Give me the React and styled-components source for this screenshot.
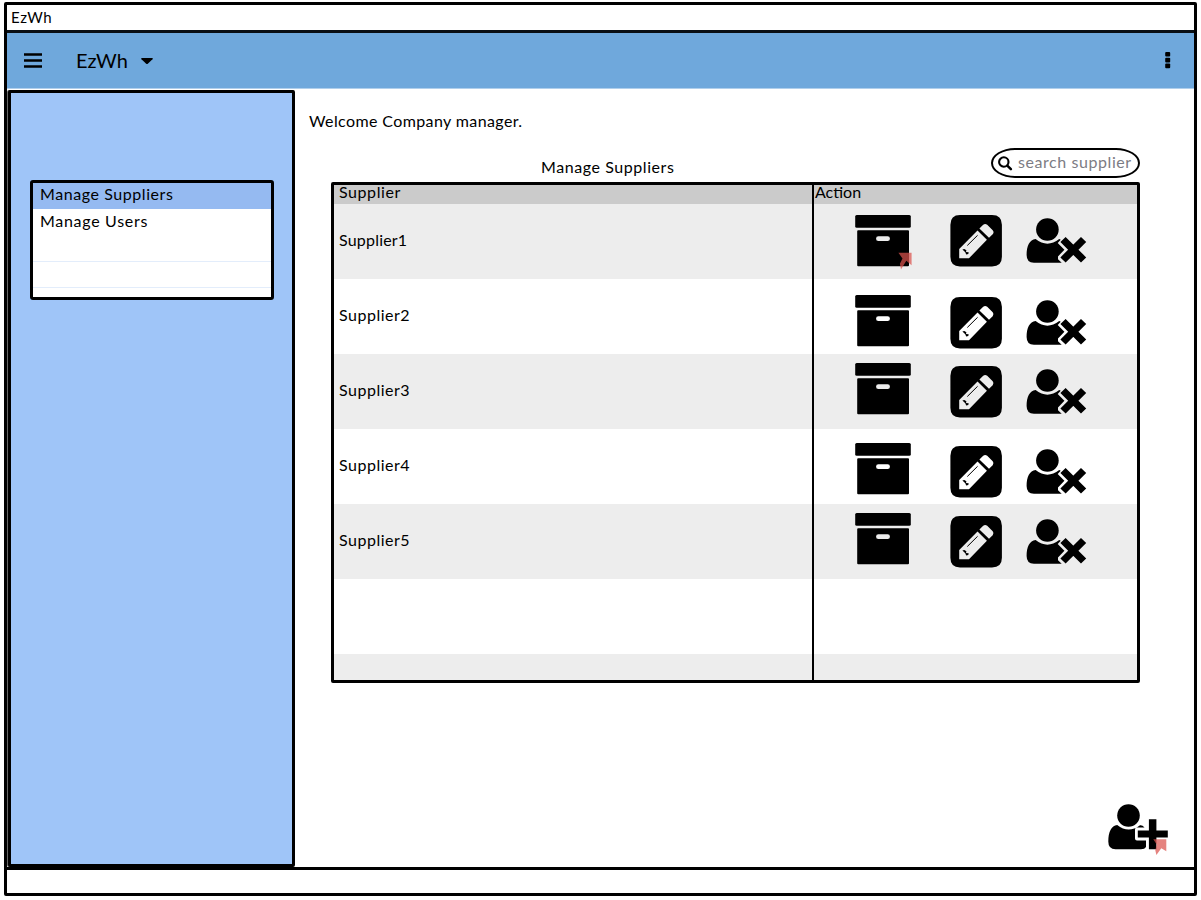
import React from 'react';
import styled, { createGlobalStyle } from 'styled-components';

const GlobalStyle = createGlobalStyle`
  * { box-sizing: border-box; }
  body {
    margin: 0;
    background: #fff;
    color: #000;
    font-family: Lato, "Liberation Sans", sans-serif;
    font-size: 16px;
    line-height: 20px;
  }
  svg { display: block; overflow: visible; flex: none; }
`;

const Label = styled.span`
  font-size: ${(p) => p.$size || 16}px;
  letter-spacing: ${(p) => p.$track ?? 0.57}px;
  white-space: nowrap;
`;

const Window = styled.div`
  display: flex;
  flex-direction: column;
  width: 1193px;
  height: 894px;
  margin: 2px 0 0 4px;
  border: 3px solid #000;
  border-radius: 2px;
`;

const TitleBar = styled.header`
  flex: none;
  height: 28px;
  padding: 2px 0 0 4px;
  border-bottom: 3px solid #0a0f14;
`;

const AppBar = styled.nav`
  flex: none;
  display: flex;
  align-items: center;
  height: 56px;
  padding: 0 23px 1px 17px;
  background: #6fa8dc;
  border-bottom: 1px solid #b0cfec;
`;

const Brand = styled.div`
  display: flex;
  align-items: center;
  gap: 13px;
  flex: 1;
  margin: -1px 0 0 34px;
`;

const Body = styled.div`
  display: flex;
  flex: 1;
  min-height: 0;
`;

const Sidebar = styled.aside`
  width: 287px;
  margin: 1px 0 0 1px;
  padding: 87px 0 0 19px;
  background: #9fc5f8;
  border: 3px solid #000;
  border-radius: 2px;
  box-shadow: -1px 0 0 #666;
`;

const Menu = styled.ul`
  width: 244px;
  height: 120px;
  margin: 0;
  padding: 0;
  list-style: none;
  overflow: hidden;
  background: #fff;
  border: 3px solid #000;
  border-radius: 3px;
`;

const MenuItem = styled.li`
  height: 26px;
  padding: ${(p) => (p.$active ? 1 : 2)}px 0 0 7px;
  background: ${(p) => (p.$active ? '#95baf1' : '#fff')};
  border-bottom: ${(p) => (p.$ruled ? '1px solid #e3edfb' : 'none')};

  &:nth-child(3) { height: 27px; }
`;

const Content = styled.main`
  flex: 1;
  display: flex;
  flex-direction: column;
  padding: 22px 26px 17px 14px;
`;

const Heading = styled.div`
  display: flex;
  align-items: flex-start;
  justify-content: space-between;
  height: 34px;
  margin: 17px 28px 0 232px;
`;

const Caption = styled.div`
  padding-top: 9px;
`;

const SearchBox = styled.div`
  display: flex;
  align-items: center;
  gap: 5px;
  width: 149px;
  height: 30px;
  padding: 0 0 2px 5px;
  color: #7c7c84;
  border: 2.5px solid #000;
  border-radius: 24px / 15px;
`;

const Table = styled.section`
  display: flex;
  flex-direction: column;
  width: 809px;
  height: 501px;
  margin-left: 22px;
  overflow: hidden;
  border: 3px solid #000;
  border-radius: 2px;
`;

const Row = styled.div`
  display: grid;
  grid-template-columns: 480px 1fr;
  flex: none;
  height: ${(p) => p.$height || 75}px;
  background: ${(p) => p.$fill};
`;

const NameCell = styled.div`
  display: flex;
  align-items: center;
  padding: 0 0 4px 5px;
  border-right: 2px solid #000;
`;

const NameHead = styled(NameCell)`
  align-items: flex-start;
  padding-bottom: 0;
  line-height: 14px;
`;

const ActionHead = styled.div`
  padding-left: 1px;
  line-height: 14px;
`;

const ActionCell = styled.div`
  display: flex;
  align-items: flex-start;
`;

const IconButton = styled.button`
  display: block;
  margin: ${(p) => p.$top}px 0 0 ${(p) => p.$left}px;
  padding: 0;
  background: none;
  border: 0;
`;

const AddUser = styled.button`
  align-self: flex-end;
  margin-top: auto;
  padding: 0;
  background: none;
  border: 0;
`;

const Footer = styled.footer`
  flex: none;
  height: 26px;
  border-top: 3px solid #000;
`;

const MARK = 'rgba(219, 83, 78, 0.72)';

function ArchiveIcon({ marked }) {
  return (
    <svg width="56" height="52" viewBox="0 0 56 52">
      <rect x="0.2" width="55.6" height="12.8" rx="1.5" />
      <path
        fillRule="evenodd"
        d="M3.2 15.2H53q1 0 1 1V50.3q0 1-1 1H3.2q-1 0-1-1V16.2q0-1 1-1ZM23.4 21.3a2.3 2.3 0 0 0 0 4.7h9.2a2.3 2.3 0 0 0 0-4.7Z"
      />
      {marked && <path fill={MARK} d="M43.4 37.7H56.600V50.300L51.300 45.800 46 54.500 44.900 48.800 47.500 43.500Z" />}
    </svg>
  );
}

function PencilIcon() {
  return (
    <svg width="52" height="52" viewBox="0 0 52 52">
      <path
        fillRule="evenodd"
        d="M10 0H42Q51.900 0 51.900 9.700V41.700Q51.900 51.400 42 51.400H10Q.4 51.400 .4 41.700V9.700Q.4 0 10 0ZM9.200 34 27.500 15.500 36.900 24.800 19 43.300H9.200ZM29.400 13.500 33.200 9.700Q35.100 8.200 37.200 9.700L42.700 15.200Q44.400 17.200 42.700 19.200L39 22.800Z"
      />
      <path d="M17.300 30.500 27.600 20.300" stroke="#000" strokeWidth="1" />
      <path d="M12.400 34.600 14.300 34 16.400 35.300 16 37 18.700 37.300 18.300 39 16.200 39.600 15.300 37.300Z" />
    </svg>
  );
}

function RemoveUserIcon() {
  return (
    <svg width="60" height="46" viewBox="0 0 60 46">
      <g transform="translate(0.400 0)">
        <circle cx="21" cy="11.500" r="11.300" />
        <path d="M9.200 21Q21 30.300 32.800 21L34.300 21.700 31.300 25 38 31.800 31.600 38.400V41.300L35.300 44.700H7.500Q.2 44.700 .2 37 .2 22.500 9.200 21Z" />
        <path d="M36.600 21.500 57.200 42M57.200 21.500 36.600 42" stroke="#000" strokeWidth="7.400" />
      </g>
    </svg>
  );
}

function AddUserIcon() {
  return (
    <svg width="60" height="46" viewBox="0 0 60 46">
      <circle cx="20.500" cy="11.500" r="11.300" />
      <path d="M9.200 21Q20.500 30 32 21.200 34.500 20.900 36.500 23.500H29Q27 23.500 27 25.500V34.500Q27 36.600 29 36.600H38V43Q36.800 45.300 33 45.300H7.500Q.3 45.300 .3 37.500 .3 22.500 9.200 21Z" />
      <path d="M40.900 15.300H48.400V26.600H59.800V33.500H48.400V45.300H40.900V33.500H29.800V26.600H40.900Z" />
      <path fill={MARK} d="M45.300 35.300H58.300V47.300L53.300 44.300 48.400 51 47.300 46.300 48.700 40.600Z" />
    </svg>
  );
}

const suppliers = [
  { name: 'Supplier1', tops: [11, 11, 14], marked: true, track: 0.2 },
  { name: 'Supplier2', tops: [16, 18, 21] },
  { name: 'Supplier3', tops: [9, 12, 15] },
  { name: 'Supplier4', tops: [14, 17, 20] },
  { name: 'Supplier5', tops: [9, 12, 15] },
];

export default function App() {
  return (
    <>
      <GlobalStyle />
      <Window>
        <TitleBar>
          <Label $size={15} $track={0.6}>EzWh</Label>
        </TitleBar>
        <AppBar>
          <svg width="18" height="15" viewBox="0 0 18 15">
            <path d="M0 1.500H18M0 7.500H18M0 13.500H18" stroke="#000" strokeWidth="2.600" />
          </svg>
          <Brand>
            <Label $size={20} $track={0}>EzWh</Label>
            <svg width="12" height="6" viewBox="0 0 12 6">
              <path d="M.7 1H11.300Q12.300 1.400 11.500 2.200L6.800 6.800Q6 7.400 5.200 6.800L.5 2.200Q-.3 1.400 .7 1Z" />
            </svg>
          </Brand>
          <svg width="6" height="17" viewBox="0 0 6 17">
            <rect x="0.200" y="0" width="5" height="4.600" rx="1" />
            <rect x="0.200" y="5.800" width="5" height="4.600" rx="1" />
            <rect x="0.200" y="11.600" width="5" height="4.600" rx="1" />
          </svg>
        </AppBar>
        <Body>
          <Sidebar>
            <Menu>
              <MenuItem $active><Label>Manage Suppliers</Label></MenuItem>
              <MenuItem><Label $track={0.7}>Manage Users</Label></MenuItem>
              <MenuItem $ruled />
              <MenuItem $ruled />
            </Menu>
          </Sidebar>
          <Content>
            <Label $track={0.39}>Welcome Company manager.</Label>
            <Heading>
              <Caption><Label>Manage Suppliers</Label></Caption>
              <SearchBox>
                <svg width="15" height="15" viewBox="0 0 15 15" fill="none" stroke="#000">
                  <circle cx="5.800" cy="7" r="4.700" strokeWidth="2.100" />
                  <path d="M9.300 10.600 12.900 14.200" strokeWidth="2.500" strokeLinecap="round" />
                </svg>
                <Label>search supplier</Label>
              </SearchBox>
            </Heading>
            <Table>
              <Row $height={19} $fill="#cbcbcb">
                <NameHead><Label>Supplier</Label></NameHead>
                <ActionHead><Label $track={0}>Action</Label></ActionHead>
              </Row>
              {suppliers.map((s, i) => (
                <Row key={s.name} $fill={i % 2 ? '#fff' : '#ededed'}>
                  <NameCell><Label $track={s.track ?? 0.5}>{s.name}</Label></NameCell>
                  <ActionCell>
                    <IconButton $top={s.tops[0]} $left={41}><ArchiveIcon marked={s.marked} /></IconButton>
                    <IconButton $top={s.tops[1]} $left={39}><PencilIcon /></IconButton>
                    <IconButton $top={s.tops[2]} $left={24}><RemoveUserIcon /></IconButton>
                  </ActionCell>
                </Row>
              ))}
              <Row $fill="#fff"><NameCell /></Row>
              <Row $height={28} $fill="#ededed"><NameCell /></Row>
            </Table>
            <AddUser><AddUserIcon /></AddUser>
          </Content>
        </Body>
        <Footer />
      </Window>
    </>
  );
}
